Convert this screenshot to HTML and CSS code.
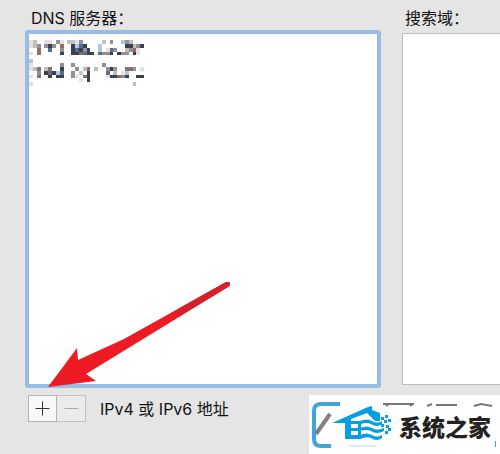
FILE: index.html
```html
<!DOCTYPE html>
<html lang="zh-CN">
<head>
  <meta charset="UTF-8">
  <meta name="viewport" content="width=device-width, initial-scale=1">
  <title>DNS</title>
  <link rel="stylesheet" href="styles.css">
</head>
<body>

<main class="dns-panel">
  <section class="servers">
    <h2 id="dns-title">DNS 服务器：</h2>
    <div class="list focused" role="listbox" aria-labelledby="dns-title" tabindex="0">
      <!-- pixelated addresses -->
      <svg class="mosaic" viewBox="0 0 30 12" preserveAspectRatio="none" shape-rendering="crispEdges" aria-hidden="true">
        <g transform="translate(0 .5)" fill="none" stroke-width="1">
          <path stroke="#e6e0df" d="M0 0h1M0 1h1M0 3h1M4 0h2M8 0h1M12 0h1M20 2h1M28 2h1M28 3h1M0 6h1M0 7h1M0 9h1M0 11h1M12 9h1M20 9h1M24 8h1M29 7h1M13 10h1"/>
          <path stroke="#c4bdba" d="M1 0h1M1 1h1M10 0h1M26 0h1M17 7h1M14 7h1M4 7h1M22 8h1M23 9h1M27 11h1M1 7h1M27 1h1M25 2h1"/>
          <path stroke="#b3c8d8" d="M0 5h1M18 1h1M18 2h1M19 0h1M24 0h1M7 8h1M13 8h1M11 0h1M12 1h1M25 8h1"/>
          <path stroke="#948e96" d="M7 0h1M2 1h1M4 1h1M6 1h1M8 2h1M13 0h1M21 0h1M19 3h2M22 2h1M25 0h1M26 2h1M24 3h2M28 1h1M8 6h1M11 6h1M12 7h1M2 8h1M11 8h1M11 9h1M19 6h1M20 7h1M22 7h1M27 7h1M14 2h1M24 9h1"/>
          <path stroke="#576f8c" d="M5 2h1M12 2h1M13 1h1M18 3h1M21 2h1M5 8h1M20 8h1M8 8h1M14 3h1"/>
          <path stroke="#8a7069" d="M2 2h1M2 3h1M8 1h1M13 3h1M27 2h1M2 7h1M2 9h1M5 7h1M15 7h1M14 9h1M25 7h2M23 9h1"/>
          <path stroke="#3b414c" d="M5 1h1M8 3h1M11 1h1M11 2h1M11 3h2M13 2h1M14 1h1M15 2h1M15 3h2M21 3h1M23 3h1M25 1h2M27 3h1M29 1h1M8 7h1M4 8h1M6 8h1M5 9h1M7 9h2M15 8h1M15 9h1M21 7h1M21 9h2M25 9h1M28 9h2M15 10h1"/>
        </g>
      </svg>
    </div>
    <div class="actions">
      <div class="stepper">
        <button type="button" aria-label="添加">
          <svg viewBox="0 0 15 15"><path d="M7.5 .5v14M.5 7.5h14"/></svg>
        </button>
        <button type="button" aria-label="移除" disabled>
          <svg viewBox="0 0 15 15"><path d="M.5 7.5h14"/></svg>
        </button>
      </div>
      <span class="hint">IPv4 或 IPv6 地址</span>
    </div>
    <svg class="arrow" viewBox="0 0 182 106" aria-hidden="true">
      <path fill="#ed1c24" d="M0 105 29 66 30 78 76 57 178 0Q182-1 182 2Q182 4 180 5L38 92 48 99Z"/>
      <path fill="#d5202c" d="M130 27 178 0Q182-1 182 2Q182 4 180 5L130 35Z"/>
    </svg>
  </section>

  <section class="domains">
    <h2 id="domain-title">搜索域：</h2>
    <div class="list" role="listbox" aria-labelledby="domain-title" tabindex="0"></div>
  </section>
</main>

<div class="brand">
  <svg class="brand-back" viewBox="0 0 191 59" aria-hidden="true">
    <path fill="none" stroke="#42a5d9" stroke-width="4" d="M31 9H12Q5 9 5 16V44Q5 51 12 51H22"/>
    <path stroke="#858080" stroke-width="4" d="M7 39 21 19"/>
    <path fill="none" stroke="#777" stroke-width="2" d="M74 9H105M118 11l5-2M127 10h21M165 11l7-2 11 2M80 9l-3 2M104 9l-3 2"/>
    <path stroke="#37a8df" stroke-width="1" d="M186.500 46v6"/>
  </svg>
  <svg class="brand-logo" viewBox="0 0 60 46" aria-hidden="true">
    <g fill="#079fe2">
      <path d="M1 19 37 3 41 2V6L49 9V17H44L36 9 20 15V17H31V20H20V24H29V27H20V31H29V35H14V19Z"/>
      <path d="M27 17h3v18h-3zM29 17Q36 14 41 17 46 20 51 17V20Q46 24 40 20 36 18 29 20ZM29 24Q36 21 41 24 46 27 53 24V27Q46 31 40 27 36 25 29 27ZM29 31Q36 28 41 31 46 34 51 31V34Q46 38 40 34 36 32 29 35Z"/>
      <path d="M50 13h3v3h-3zM54 11h3v3h-3zM53 16h3v3h-3zM57 15h3v3h-3zM50 20h3v3h-3zM55 21h3v3h-3zM54 27h3v3h-3zM57 24h3v3h-3z"/>
    </g>
    <path stroke="#d5edf7" stroke-width="2" d="M18 42H45"/>
  </svg>
  <span>系统之家</span>
</div>

</body>
</html>
```
FILE: styles.css
```css
* {
  box-sizing: border-box;
}
body {
  margin: 0;
  background: #e5e5e5;
  color: #111;
  font: 16px/20px Inter, "Noto Sans CJK SC", sans-serif;
  overflow-x: hidden;
}
.dns-panel {
  display: grid;
  grid-template-columns: minmax(0, 1fr) 98px;
  gap: 24px;
  padding: 8px 0 32px 28px;
}
.servers {
  position: relative;
}
h2 {
  margin: 0 0 5px;
  padding-left: 3px;
  font-size: 16px;
  font-weight: 400;
  white-space: nowrap;
}
.list {
  height: 352px;
  background: #fff;
  border: 1px solid #bebebe;
  outline: none;
}
.domains .list {
  border-right: 0;
}
.list.focused {
  border: 1px solid #94b8df;
  box-shadow: 0 0 0 3px #9bbde2;
  border-radius: 1px;
}
.mosaic {
  display: block;
  width: 115px;
  height: 46px;
  margin-top: 6px;
}
.actions {
  display: flex;
  align-items: center;
  gap: 14px;
  margin-top: 10px;
}
.stepper {
  display: flex;
}
.stepper button {
  display: grid;
  place-items: center;
  width: 29px;
  height: 27px;
  padding: 0;
  border: 1px solid #b5b5b5;
  background: #f8f8f8;
}
.stepper button + button {
  border-left: 0;
}
.stepper button:disabled {
  background: #ebebeb;
  border-color: #c2c2c2;
}
.stepper svg {
  width: 15px;
  height: 15px;
  fill: none;
  stroke: #333;
}
.stepper button:disabled svg {
  stroke: #aaa;
}
.arrow {
  position: absolute;
  left: 20px;
  bottom: 34px;
  width: 182px;
  height: 106px;
}
.brand {
  position: absolute;
  right: 0;
  bottom: 0;
  display: flex;
  align-items: center;
  width: 191px;
  height: 59px;
  padding-left: 22px;
  background: #fff;
}
.brand-back {
  position: absolute;
  left: 0;
  top: 0;
  width: 191px;
  height: 59px;
}
.brand-logo {
  position: relative;
  width: 60px;
  height: 46px;
  margin-top: 4px;
}
.brand span {
  position: relative;
  margin: 2px 0 0 8px;
  color: #222;
  font: 900 23px/30px "Noto Sans CJK SC", sans-serif;
  white-space: nowrap;
}
```
